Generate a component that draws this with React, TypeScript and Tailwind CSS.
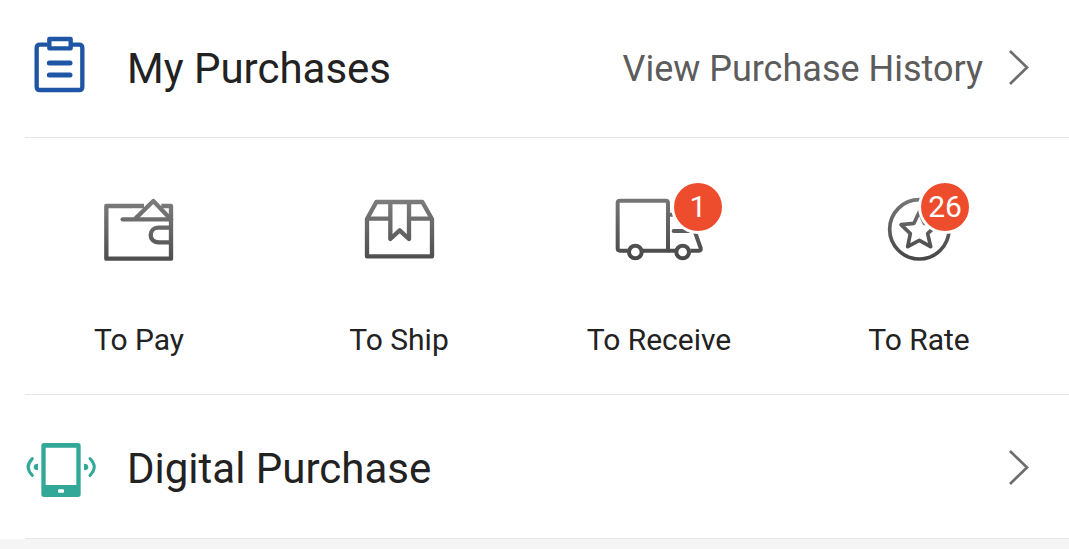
import type { ReactNode } from 'react';

interface PurchaseStep {
  label: string;
  icon: ReactNode;
  badge?: number;
  /** Where the badge overlaps the icon */
  badgeClass?: string;
}

/** Shared vertical grey fade used by the outline icons. */
function Fade({ id }: { id: string }) {
  return (
    <defs>
      <linearGradient id={id} gradientUnits="userSpaceOnUse" x1="0" y1="45" x2="0" y2="250">
        <stop offset="0" stopColor="#7c7c7c" />
        <stop offset="1" stopColor="#484848" />
      </linearGradient>
    </defs>
  );
}

function WalletIcon() {
  return (
    <svg className="w-[100px] h-[90px]" viewBox="-3 0 300 270" fill="none" stroke="url(#wallet)" strokeWidth="13" strokeLinejoin="round" aria-hidden="true">
      <Fade id="wallet" />
      <path d="M162 63H49V221H243V63H214" />
      <path d="M98 103H243" strokeLinecap="round" />
      <path d="M136 101L190 48L241 101" />
      <path d="M242 128H206C174 128 174 172 206 172H242" />
    </svg>
  );
}

function BoxIcon() {
  return (
    <svg className="w-[100px] h-[90px]" viewBox="-3 0 300 270" fill="none" stroke="url(#box)" strokeWidth="13" strokeLinejoin="round" aria-hidden="true">
      <Fade id="box" />
      <path d="M51 102L79 51H217L246 102V214H51Z" />
      <path d="M51 101H120M178 101H246" />
      <path d="M121 51V162L149 136L177 162V51" />
    </svg>
  );
}

function TruckIcon() {
  return (
    <svg className="w-[100px] h-[90px]" viewBox="12 30 300 270" fill="none" stroke="url(#truck)" strokeWidth="12" strokeLinejoin="round" aria-hidden="true">
      <Fade id="truck" />
      <path d="M68 227H45Q38 227 38 220V84Q38 77 45 77H182Q189 77 189 84V227H113" />
      <path d="M189 119H245L272 177L287 219Q289 227 281 227H257M210 227H189" />
      <path d="M206 168H252" strokeLinecap="round" />
      <circle cx="91" cy="231" r="19" />
      <circle cx="233" cy="231" r="19" />
    </svg>
  );
}

function StarIcon() {
  return (
    <svg className="w-[100px] h-[90px]" viewBox="-18 30 300 270" fill="none" stroke="url(#star)" strokeWidth="11" strokeLinejoin="round" aria-hidden="true">
      <Fade id="star" />
      <circle cx="133" cy="163" r="89" />
      <path d="M133 110L148 145L186 149L158 176L167 215L133 196L98 215L106 176L78 149L117 145Z" />
    </svg>
  );
}

function ClipboardIcon() {
  return (
    <svg className="w-[90px] h-20 shrink-0" viewBox="0 12 270 240" fill="none" stroke="#1f55a5" strokeWidth="13" strokeLinejoin="round" aria-hidden="true">
      <path d="M83 59H60Q50 59 50 69V185Q50 195 60 195H177Q187 195 187 185V69Q187 59 177 59H155" />
      <path d="M88 42H152V70H88Z" />
      <path d="M88 114H150M88 150H150" strokeWidth="15" strokeLinecap="round" />
    </svg>
  );
}

function PhoneIcon() {
  return (
    <svg className="w-[90px] h-20 shrink-0" viewBox="15 -3 270 240" fill="none" stroke="#31a898" strokeWidth="9" strokeLinecap="round" aria-hidden="true">
      <path d="M87 39H189Q197 39 197 47V193Q197 201 189 201H87Q79 201 79 193V47Q79 39 87 39ZM92 53V165H184V53Z" fill="#31a898" fillRule="evenodd" stroke="none" />
      <rect x="129" y="178" width="18" height="10" rx="3" fill="white" stroke="none" />
      <path d="M52 86Q27 111 52 136M225 86Q250 111 225 136" />
      <path d="M69 101Q56 101 56 111T69 121ZM207 101Q220 101 220 111T207 121Z" fill="#31a898" stroke="none" />
    </svg>
  );
}

function Chevron() {
  return (
    <svg className="w-6 h-10 shrink-0" viewBox="0 0 24 40" fill="none" stroke="#6e6e6e" strokeWidth="2.7" aria-hidden="true">
      <path d="M3 2L20 18.500L3 35" />
    </svg>
  );
}

const steps: PurchaseStep[] = [
  { label: 'To Pay', icon: <WalletIcon /> },
  { label: 'To Ship', icon: <BoxIcon /> },
  { label: 'To Receive', icon: <TruckIcon />, badge: 1, badgeClass: 'left-[65px]' },
  { label: 'To Rate', icon: <StarIcon />, badge: 26, badgeClass: 'left-[52px]' },
];

export default function App() {
  return (
    <div className="min-h-screen flex flex-col bg-white text-[#222222] font-['Roboto',sans-serif]">
      <header className="flex items-center h-[137px] pl-5 pr-[38px]">
        <ClipboardIcon />
        <h2 className="ml-[17px] text-[42px] leading-[48px]">My Purchases</h2>
        <a href="#history" className="ml-auto flex items-center gap-6 text-[36px] leading-[48px] text-[#5c5c5c]">
          View Purchase History
          <Chevron />
        </a>
      </header>

      <nav className="ml-[25px] border-t border-[#e6e6e6]">
        <ul className="-ml-4 pr-5 pt-[47px] pb-[34px] grid grid-cols-4">
          {steps.map((s) => (
            <li key={s.label}>
              <a href="#orders" className="flex flex-col items-center gap-[45px]">
                <span className="relative">
                  {s.icon}
                  {s.badge !== undefined && (
                    <span
                      className={`absolute -top-0.5 size-12 rounded-full bg-[#ee4d2d] ring-3 ring-white flex items-center justify-center text-[30px] leading-none text-white ${s.badgeClass}`}
                    >
                      {s.badge}
                    </span>
                  )}
                </span>
                <span className="text-[30px] leading-10">{s.label}</span>
              </a>
            </li>
          ))}
        </ul>
      </nav>

      <section className="ml-[25px] border-y border-[#e6e6e6]">
        <a href="#digital" className="-ml-[5px] flex items-center h-[143px] pt-1 pr-[38px]">
          <PhoneIcon />
          <h2 className="ml-[17px] text-[42px] leading-[48px]">Digital Purchase</h2>
          <span className="ml-auto">
            <Chevron />
          </span>
        </a>
      </section>

      <div className="flex-1 bg-[#f5f5f5]" />
    </div>
  );
}
